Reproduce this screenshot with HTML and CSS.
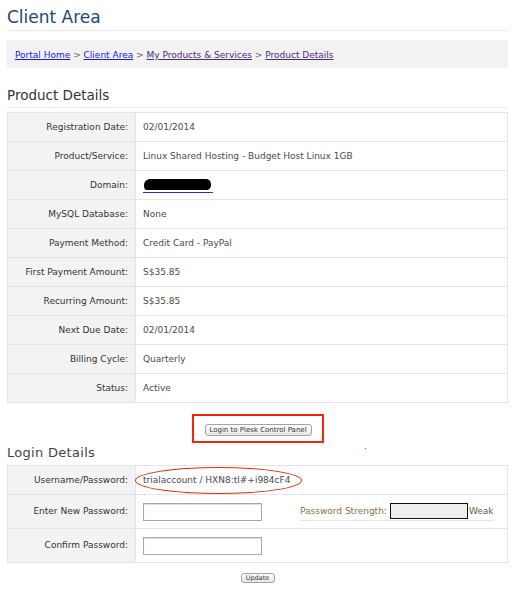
FILE: index.html
```html
<!DOCTYPE html>
<html>
<head>
<meta charset="utf-8">
<title>Client Area</title>
<link rel="stylesheet" href="styles.css">
</head>
<body>
<div class="page">
  <h1 class="title">Client Area</h1>
  <div class="crumbs">
    <a href="#">Portal Home</a> &gt; <a href="#">Client Area</a> &gt; <a class="visited" href="#">My Products &amp; Services</a> &gt; <a class="visited" href="#">Product Details</a>
  </div>

  <h2 class="section">Product Details</h2>
  <table class="details">
    <tr><td class="label">Registration Date:</td><td class="value">02/01/2014</td></tr>
    <tr><td class="label">Product/Service:</td><td class="value">Linux Shared Hosting - Budget Host Linux 1GB</td></tr>
    <tr><td class="label">Domain:</td><td class="value"><a class="domain" href="#"><span class="blot"></span></a></td></tr>
    <tr><td class="label">MySQL Database:</td><td class="value">None</td></tr>
    <tr><td class="label">Payment Method:</td><td class="value">Credit Card - PayPal</td></tr>
    <tr><td class="label">First Payment Amount:</td><td class="value">S$35.85</td></tr>
    <tr><td class="label">Recurring Amount:</td><td class="value">S$35.85</td></tr>
    <tr><td class="label">Next Due Date:</td><td class="value">02/01/2014</td></tr>
    <tr><td class="label">Billing Cycle:</td><td class="value">Quarterly</td></tr>
    <tr><td class="label">Status:</td><td class="value">Active</td></tr>
  </table>

  <div class="action">
    <div class="highlight"><button class="btn" type="button">Login to Plesk Control Panel</button></div>
  </div>

  <h3 class="section small">Login Details<span class="dot"></span></h3>
  <table class="details login">
    <tr><td class="label">Username/Password:</td><td class="value cred">trialaccount / HXN8:tl#+i984cF4<span class="ellipse"></span></td></tr>
    <tr class="tall"><td class="label">Enter New Password:</td><td class="value"><div class="pwrow"><input class="field" type="password"><span class="strength"><span class="st-label">Password Strength:</span><span class="meter"></span><span class="st-value">Weak</span></span></div></td></tr>
    <tr class="tall"><td class="label">Confirm Password:</td><td class="value"><input class="field" type="password"></td></tr>
  </table>

  <div class="update"><button class="btn small-btn" type="button">Update</button></div>
</div>
</body>
</html>
```
FILE: styles.css
```css
body {
  margin: 0;
  background: #fff;
  font-family: "DejaVu Sans", "Noto Sans", sans-serif;
  color: #333;
}
.page {
  padding: 0 9px 0 7px;
}
.title {
  margin: 0;
  padding: 6px 0 2px;
  font-size: 17px;
  line-height: 22px;
  font-weight: normal;
  color: #1e4677;
  border-bottom: 1px solid #e8e8e8;
}
.crumbs {
  margin-top: 9px;
  height: 28px;
  padding-left: 8px;
  background: #f2f2f2;
  font-size: 9px;
  line-height: 31px;
  color: #666;
}
.crumbs a {
  color: #1a1ae6;
}
.crumbs a.visited {
  color: #4b2a85;
}
.section {
  margin: 18px 0 0;
  padding-bottom: 3px;
  font-size: 13.5px;
  line-height: 18px;
  font-weight: normal;
  color: #333;
  border-bottom: 1px solid #ececec;
}
.section.small {
  position: relative;
  margin-top: 2px;
  padding-bottom: 4px;
  font-size: 13px;
  line-height: 16px;
  letter-spacing: 0.3px;
  color: #444;
  border-bottom: none;
}
.dot {
  position: absolute;
  left: 358px;
  top: 3px;
  width: 1px;
  height: 1px;
  background: #e8280c;
}
.details {
  width: 100%;
  margin-top: 4px;
  border-collapse: separate;
  border-spacing: 0;
  border-top: 1px solid #e4e4e4;
  border-left: 1px solid #e4e4e4;
  table-layout: fixed;
  font-size: 9px;
}
.details td {
  padding: 0;
  line-height: 28px;
  border-right: 1px solid #e4e4e4;
  border-bottom: 1px solid #e4e4e4;
  white-space: nowrap;
}
.details .label {
  box-sizing: border-box;
  width: 128px;
  padding-right: 7px;
  text-align: right;
  background: #f3f3f3;
  color: #333;
}
.details .value {
  padding-left: 7px;
  color: #4a4a4a;
}
.domain {
  display: inline-block;
  vertical-align: middle;
  width: 70px;
  height: 14px;
  border-bottom: 1px solid #2a2ad8;
  box-sizing: border-box;
  padding: 0 2px 2px 1px;
}
.blot {
  display: block;
  height: 11px;
  background: #000;
  border-radius: 6px 5px 4px 3px / 6px 5px 5px 4px;
}
.action {
  margin-top: 11px;
  text-align: center;
}
.highlight {
  display: inline-block;
  padding: 8px 10px 5px 11px;
  border: 2px solid #f0280a;
  line-height: 0;
}
.btn {
  margin: 0;
  height: 12px;
  width: 107px;
  padding: 0;
  border: 1px solid #a3a3a3;
  border-radius: 3px;
  background: linear-gradient(#ffffff, #e6e6e6);
  font-family: "DejaVu Sans", sans-serif;
  font-size: 7px;
  line-height: 10px;
  color: #333;
}
.login {
  margin-top: 0;
}
.login tr.tall td {
  line-height: 33px;
}
.cred {
  position: relative;
}
.ellipse {
  position: absolute;
  left: -1px;
  top: 1px;
  width: 165px;
  height: 25px;
  border: 1.5px solid #e8280c;
  border-radius: 50%;
}
.pwrow {
  display: flex;
  align-items: center;
  height: 33px;
}
.field {
  box-sizing: border-box;
  width: 119px;
  height: 18px;
  margin: 0;
  padding: 0 2px;
  border: 1px solid #a8a8a8;
  box-shadow: inset 0 1px 1px #ddd;
  vertical-align: middle;
  background: #fff;
}
.strength {
  display: flex;
  align-items: center;
  margin-left: 38px;
  height: 18px;
  border-bottom: 1px solid #e6e6e6;
  line-height: 16px;
}
.st-label {
  color: #8a7046;
}
.meter {
  box-sizing: border-box;
  width: 78px;
  height: 16px;
  margin-left: 3px;
  border: 1px solid #111;
  background: #eeeeee;
}
.st-value {
  margin-left: 1px;
  color: #6a5a44;
}
.update {
  display: flex;
  justify-content: center;
  margin-top: 10px;
}
.small-btn {
  width: 34px;
  height: 10px;
  line-height: 8px;
  font-size: 6.5px;
}
```
